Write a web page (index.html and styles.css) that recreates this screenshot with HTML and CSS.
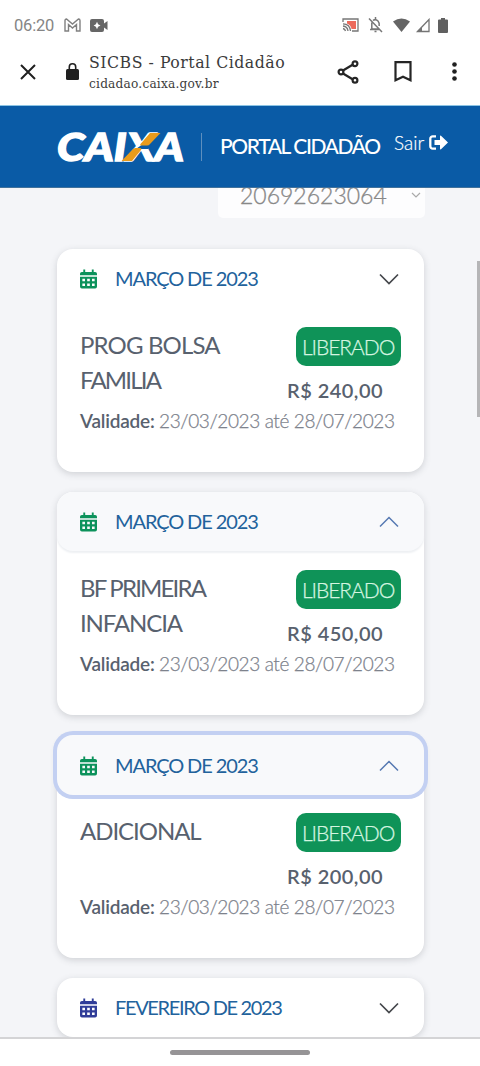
FILE: index.html
```html
<!DOCTYPE html>
<html lang="pt-BR">
<head>
<meta charset="utf-8">
<title>SICBS - Portal Cidadão</title>
<link rel="stylesheet" href="styles.css">
</head>
<body>
<svg width="0" height="0" class="defs">
  <symbol id="calendar" viewBox="0 0 18 20">
    <path fill="currentColor" fill-rule="evenodd" d="M3.500 0h2v2.500h7V0h2v2.500H16a2 2 0 0 1 2 2V6H0V4.500a2 2 0 0 1 2-2h1.500zM0 7.500h18V18a2 2 0 0 1-2 2H2a2 2 0 0 1-2-2zM2.500 9.700v2.800h2.800V9.700zm5.100 0v2.800h2.800V9.700zm5.100 0v2.800h2.800V9.700zM2.500 14.700v2.800h2.800v-2.800zm5.100 0v2.800h2.800v-2.800zm5.100 0v2.800h2.800v-2.800z"/>
  </symbol>
  <symbol id="down" viewBox="0 0 20 12"><path d="M1 1.500 10 10.500 19 1.500" fill="none" stroke="currentColor" stroke-width="1.700"/></symbol>
  <symbol id="up" viewBox="0 0 20 12"><path d="M1 10.500 10 1.500 19 10.500" fill="none" stroke="currentColor" stroke-width="1.500"/></symbol>
</svg>
<div class="screen">
  <div class="status">
    <span class="clock">06:20</span>
    <svg class="gmail" width="17" height="14" viewBox="0 0 17 14" fill="none" stroke="#808080" stroke-width="1.400"><path d="M1 13V2.500Q1 1 2.500 1L8.500 6l6-5Q16 1 16 2.500V13h-3.500V6.500l-4 3.500-4-3.500V13z"/></svg>
    <svg class="cam" width="18" height="13" viewBox="0 0 18 13"><path fill="#666" fill-rule="evenodd" d="M2 0h10a2 2 0 0 1 2 2v2.500L17.500 2v9L14 8.500V11a2 2 0 0 1-2 2H2a2 2 0 0 1-2-2V2a2 2 0 0 1 2-2zm5 2.800L5.900 5.300 3.600 6.500l2.300 1.200L7 10.200l1.100-2.500 2.400-1.200-2.400-1.200z"/></svg>
    <span class="grow"></span>
    <svg width="17" height="14" viewBox="0 0 17 14" fill="none" stroke="#777" stroke-width="1.300"><path d="M5 3h9v8H9.500Q9 7 5 5.500z" fill="#ec6a5c" stroke="none"/><path d="M1 4V1h15v12h-6M1 10.500Q3 11 3.500 13M1 8q4.500.5 5 5M1 5.800Q8 6 8.500 13"/></svg>
    <svg class="bell" width="15" height="16" viewBox="0 0 15 16" fill="none" stroke="#777" stroke-width="1.500"><path d="M1 1.500 14 15M5 3.500Q7.500 1.500 10 4q1.500 1.500 1.200 5M3.800 5.500V12H11M2 12.500h9M6.500 14.500h2M7.500 0v3"/></svg>
    <svg class="wifi" width="17" height="14" viewBox="0 0 17 14"><path fill="#656565" d="M0 3.500Q8.500-2.500 17 3.500L8.500 14z"/></svg>
    <svg class="signal" width="14" height="15" viewBox="0 0 14 15"><path d="M1.500 13.500 13 1.500v12z" fill="none" stroke="#747474" stroke-width="1.300"/><path fill="#747474" d="M1.500 13.500 6 9v4.500z"/></svg>
    <svg class="batt" width="10" height="15" viewBox="0 0 10 15"><path fill="#606060" d="M3 0h4v1.500h2a1 1 0 0 1 1 1V14a1 1 0 0 1-1 1H1a1 1 0 0 1-1-1V2.500a1 1 0 0 1 1-1h2z"/></svg>
  </div>
  <div class="toolbar">
    <svg class="close" width="16" height="16" viewBox="0 0 16 16"><path d="M1 1l14 14M15 1 1 15" stroke="#202020" stroke-width="2"/></svg>
    <svg class="lock" width="13" height="17" viewBox="0 0 13 17"><rect y="6" width="13" height="11" rx="1.500" fill="#202020"/><path d="M3.300 7V4a3.200 3.200 0 0 1 6.400 0v3" fill="none" stroke="#202020" stroke-width="1.600"/></svg>
    <div class="site"><span class="site-title">SICBS - Portal Cidadão</span><span class="site-url">cidadao.caixa.gov.br</span></div>
    <svg class="share" width="22" height="24" viewBox="0 0 22 24" fill="none" stroke="#252525" stroke-width="2.200"><path d="m6 10.500 10-6M6 13.500l10 6"/><circle cx="4" cy="12" r="2.400"/><circle cx="18" cy="3.800" r="2.400"/><circle cx="18" cy="20.200" r="2.400"/></svg>
    <svg class="mark" width="18" height="21" viewBox="0 0 18 21"><path d="M1.500 1.200h15v18L9 15.800l-7.500 3.400z" fill="none" stroke="#252525" stroke-width="2.200"/></svg>
    <svg class="dots" width="5" height="19" viewBox="0 0 5 19" fill="#202020"><circle cx="2.500" cy="2.500" r="2.300"/><circle cx="2.500" cy="9.500" r="2.300"/><circle cx="2.500" cy="16.500" r="2.300"/></svg>
  </div>
  <header class="banner">
    <svg class="logo" width="130" height="30" viewBox="0 0 130 30">
      <text class="logo-text" x="1" y="28.500" textLength="127" lengthAdjust="spacingAndGlyphs">CAIXA</text>
      <path fill="#0a5ba6" d="M82 15.500 87 12h10l-5 5H81z"/>
      <path fill="#e99b1b" d="M104.500 1H94L84.500 12q-1 1.500 1 1.500h5.500q2 0 3-1.500zM65.500 29H76l9-11q1-2-1-2h-4.500q-2 0-3 1.500z"/>
    </svg>
    <span class="rule"></span>
    <span class="portal">PORTAL CIDADÃO</span>
    <span class="exit">Sair</span>
    <svg class="exit-icon" width="19" height="15" viewBox="0 0 19 15"><path d="M7 1.300H4A2.500 2.500 0 0 0 1.300 4v7A2.500 2.500 0 0 0 4 13.700h3" fill="none" stroke="#fff" stroke-width="2.300"/><path fill="#fff" d="M5.500 5H11V1.200q0-1 1-.5L19 7.500l-7 6.800q-1 .5-1-.5V10H5.500z"/></svg>
  </header>
  <main class="page">
    <div class="select"><span>20692623064</span><svg width="10" height="6" viewBox="0 0 10 6"><path d="m1 1 4 4 4-4" fill="none" stroke="#aaa" stroke-width="1.200"/></svg></div>
    <div class="scroll"></div>
    <section class="card">
      <div class="head"><svg class="cal"><use href="#calendar"/></svg><span class="month">MARÇO DE 2023</span><svg class="chev"><use href="#down"/></svg></div>
      <div class="body">
        <div class="row"><div class="name"><div class="bolsa">PROG BOLSA</div><div class="familia">FAMILIA</div></div><div class="side"><span class="badge">LIBERADO</span><span class="amount">R$ 240,00</span></div></div>
        <div class="valid"><b>Validade:</b><span>23/03/2023 até 28/07/2023</span></div>
      </div>
    </section>
    <section class="card">
      <div class="head open"><svg class="cal"><use href="#calendar"/></svg><span class="month">MARÇO DE 2023</span><svg class="chev"><use href="#up"/></svg></div>
      <div class="body">
        <div class="row"><div class="name"><div class="primeira">BF PRIMEIRA</div><div class="infancia">INFANCIA</div></div><div class="side"><span class="badge">LIBERADO</span><span class="amount">R$ 450,00</span></div></div>
        <div class="valid"><b>Validade:</b><span>23/03/2023 até 28/07/2023</span></div>
      </div>
    </section>
    <section class="card">
      <div class="head open focus"><svg class="cal"><use href="#calendar"/></svg><span class="month">MARÇO DE 2023</span><svg class="chev"><use href="#up"/></svg></div>
      <div class="body">
        <div class="row"><div class="name"><div class="adicional">ADICIONAL</div></div><div class="side"><span class="badge">LIBERADO</span><span class="amount">R$ 200,00</span></div></div>
        <div class="valid"><b>Validade:</b><span>23/03/2023 até 28/07/2023</span></div>
      </div>
    </section>
    <section class="card">
      <div class="head blue"><svg class="cal"><use href="#calendar"/></svg><span class="month feb">FEVEREIRO DE 2023</span><svg class="chev"><use href="#down"/></svg></div>
    </section>
  </main>
  <footer class="nav"><span class="pill"></span></footer>
</div>
</body>
</html>
```
FILE: styles.css
```css
* { box-sizing: border-box; }
body { margin: 0; background: #fff; font-family: Lato, "Liberation Sans", sans-serif; }
svg { flex: none; }
.defs { position: absolute; }
.screen { width: 480px; height: 1066px; display: flex; flex-direction: column; overflow: hidden; white-space: nowrap; }
.status { height: 50px; flex: none; display: flex; align-items: center; padding: 0 32px 0 14px; }
.clock { font: 16.5px/20px Roboto, sans-serif; color: #858585; width: 50px; padding-top: 1px; letter-spacing: -.2px; }
.cam { margin-left: 9px; }
.grow { flex: 1; }
.bell { margin-left: 9px; }
.wifi { margin-left: 10px; }
.signal { margin-left: 6px; }
.batt { margin-left: 8px; }
.toolbar { height: 56px; flex: none; display: flex; align-items: center; padding: 0 24px 12px 20px; border-bottom: 1px solid #8cc4e4; }
.lock { margin-left: 30px; }
.site { margin-left: 10px; width: 248px; display: flex; flex-direction: column; padding-top: 2px; font-family: "DejaVu Serif Condensed", "DejaVu Serif", serif; font-stretch: condensed; color: #3b3b3b; }
.site-title { font-size: 17.5px; line-height: 22px; letter-spacing: .52px; }
.site-url { font-size: 13.5px; line-height: 21px; letter-spacing: .22px; }
.mark { margin-left: 35px; }
.dots { margin-left: auto; margin-right: -1px; }
.banner { height: 82px; flex: none; background: #0a5ba6; display: flex; align-items: center; padding-left: 56px; color: #fff; border-bottom: 1px solid #41729c; z-index: 1; }
.logo { overflow: visible; }
.logo-text { font: italic 900 38px Lato, sans-serif; fill: #fff; stroke: #fff; stroke-width: 1.4px; }
.rule { width: 1px; height: 28px; margin-left: 15px; background: #5e8fbe; }
.portal { font-size: 21px; font-weight: 500; width: 174px; margin-left: 18px; padding-bottom: 2px; letter-spacing: -1.4px; }
.exit { font-size: 19px; font-weight: 300; width: 35px; padding-bottom: 9px; -webkit-text-stroke: .2px; }
.exit-icon { margin-bottom: 9px; }
.page { flex: none; height: 851px; background: #f4f5f8; padding: 0 56px 0 57px; overflow: hidden; position: relative; border-bottom: 2px solid #d4d4d6; }
.select { width: 207px; height: 43px; margin: -13px 0 31px 161px; background: #fdfdfe; border-radius: 5px; display: flex; align-items: center; justify-content: space-between; padding: 0 4px 4px 22px; color: #888; font-size: 23px; font-weight: 300; -webkit-text-stroke: .3px; }
.scroll { position: absolute; right: 0; top: 73px; width: 3px; height: 156px; background: #b5b5b7; }
.card { width: 367px; margin-bottom: 20px; background: #fff; border-radius: 16px; box-shadow: 0 2px 7px rgba(60,65,75,.2); }
.head { height: 59px; display: flex; align-items: center; padding: 1px 25px 0 23px; border-radius: 16px; color: #45474c; }
.open { background: #f8f9fb; color: #5679b2; box-shadow: 0 2px 2px #eef0f3; }
.focus { height: 60px; margin-bottom: -1px; box-shadow: 0 0 0 4px #c3d0f2; }
.cal { width: 17px; height: 20px; color: #0c925b; }
.blue .cal { color: #303d98; }
.month { margin-left: 18px; padding-bottom: 2px; font-size: 20px; letter-spacing: -1.1px; color: #22629c; }
.feb { letter-spacing: -1.35px; }
.chev { width: 20px; height: 12px; margin-left: auto; }
.body { height: 164px; padding: 19px 23px 0; color: #58616e; }
.row { height: 79px; display: flex; justify-content: space-between; }
.name { font-size: 24px; line-height: 35px; }
.bolsa { letter-spacing: -.85px; }
.familia { letter-spacing: -1.8px; }
.primeira { letter-spacing: -1.8px; }
.infancia { letter-spacing: -1.1px; }
.adicional { letter-spacing: -1.05px; }
.side { display: flex; flex-direction: column; align-items: flex-end; }
.badge { width: 105px; height: 39px; border-radius: 10px; background: #0f9358; color: #d5f5e0; font-size: 21px; font-weight: 300; line-height: 39px; padding-left: 6px; letter-spacing: -1.05px; -webkit-text-stroke: .25px; }
.amount { font-size: 20px; font-weight: 600; line-height: 32px; margin: 8px 18px 0 0; letter-spacing: .45px; }
.valid { display: flex; font-size: 19px; line-height: 30px; color: #7d828c; font-weight: 300; letter-spacing: -.38px; -webkit-text-stroke: .25px; }
.valid b { width: 79px; font-weight: 600; letter-spacing: -.2px; color: #58616e; -webkit-text-stroke: 0; }
.nav { height: 27px; flex: none; background: #fff; display: flex; justify-content: center; padding-top: 11px; }
.pill { width: 140px; height: 5px; border-radius: 3px; background: #969496; }
```
